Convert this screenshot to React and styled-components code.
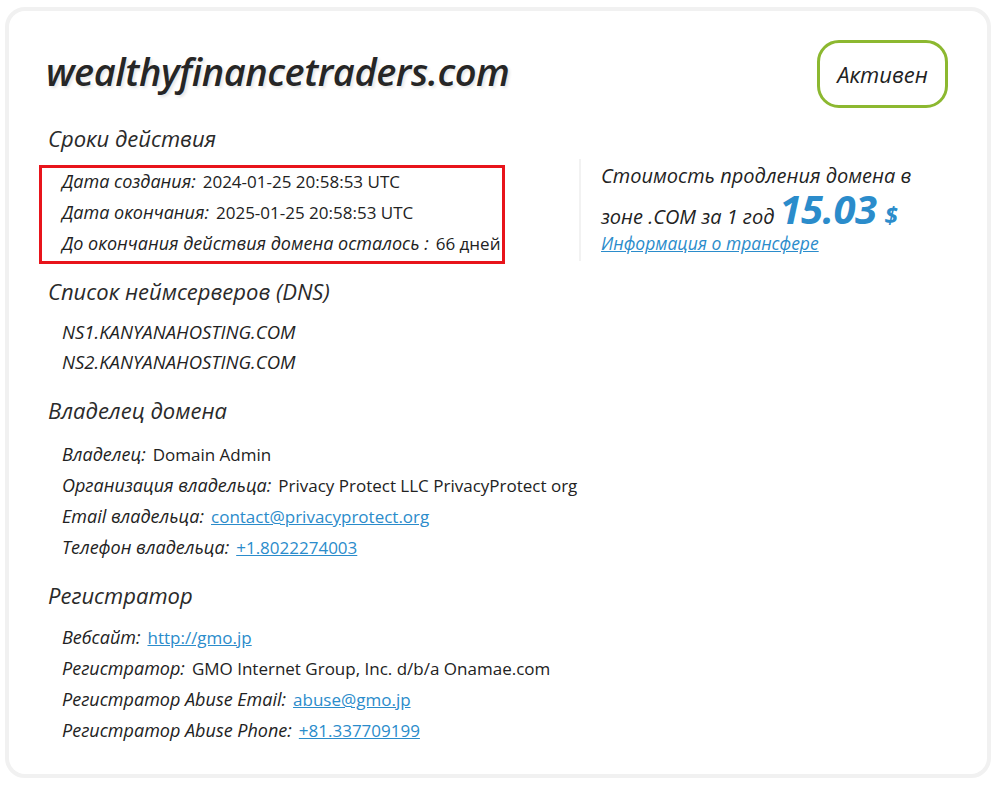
import React from "react";
import styled, { createGlobalStyle } from "styled-components";

const GlobalStyle = createGlobalStyle`
  body {
    margin: 0;
    background: #fff;
    font-family: "Open Sans", "Noto Sans", sans-serif;
    color: #222;
  }
`;

const Card = styled.div`
  box-sizing: border-box;
  width: 986px;
  height: 771px;
  margin: 7px 0 0 5px;
  border: 4px solid #f1f1f1;
  border-radius: 20px;
  padding: 30px 39px 0 30px;
`;

const Top = styled.div`
  display: flex;
  justify-content: space-between;
  align-items: flex-start;
`;

const Domain = styled.h1`
  margin: 6px 0 0 7px;
  font-size: 38px;
  line-height: 48px;
  font-style: italic;
  font-weight: 600;
  letter-spacing: -0.45px;
  color: #262626;
  text-shadow: 2px 2px 3px rgba(0, 0, 0, 0.1);
`;

const Status = styled.div`
  box-sizing: border-box;
  width: 131px;
  height: 68px;
  margin-top: -1px;
  border: 3px solid #8cb830;
  border-radius: 22px;
  display: flex;
  align-items: center;
  justify-content: center;
  font-size: 22px;
  font-style: italic;
  color: #222;
`;

const Heading = styled.h2`
  margin: ${(p) => p.$top || 0}px 0 0 9px;
  font-size: 22px;
  font-weight: 400;
  font-style: italic;
  color: #2a2a2a;
  line-height: 28px;
`;

const TermsRow = styled.div`
  display: flex;
  align-items: flex-start;
  margin-top: 13px;
`;

const Highlight = styled.div`
  box-sizing: border-box;
  width: 466px;
  border: 3px solid #e8141b;
  padding: 0 4px 2px 20px;

  & > div:first-child {
    margin-top: -2px;
  }
`;

const Price = styled.div`
  margin: -6px 0 0 74px;
  padding-left: 20px;
  border-left: 2px solid #f2f2f2;
  height: 102px;
`;

const PriceText = styled.div`
  margin-top: -2px;
  font-size: 20px;
  font-style: italic;
  line-height: 37px;
  color: #222;
  width: 330px;
`;

const Amount = styled.span`
  font-size: 40px;
  line-height: 30px;
  font-weight: 700;
  color: #2b8ccb;
  margin-left: 5px;
  letter-spacing: -0.5px;
`;

const Currency = styled.span`
  font-size: 24px;
  line-height: 30px;
  font-weight: 700;
  color: #2b8ccb;
  margin-left: 8px;
`;

const Link = styled.a`
  color: #2b8ccb;
  text-decoration: underline;
`;

const TransferLink = styled(Link)`
  display: block;
  margin-top: -4px;
  font-size: 17.5px;
  line-height: 24px;
  font-style: italic;
`;

const List = styled.div`
  margin-top: ${(p) => p.$top || 10}px;
  padding-left: 23px;
`;

const Row = styled.div`
  font-size: 17px;
  line-height: 31px;
  white-space: nowrap;
`;

const Label = styled.span`
  font-style: italic;
  font-size: 18px;
  margin-right: 7px;
`;

const Server = styled.div`
  font-size: 18.5px;
  line-height: 30px;
  font-style: italic;
`;

const terms = [
  ["Дата создания:", "2024-01-25 20:58:53 UTC"],
  ["Дата окончания:", "2025-01-25 20:58:53 UTC"],
  ["До окончания действия домена осталось :", "66 дней"],
];

const owner = [
  ["Владелец:", "Domain Admin"],
  ["Организация владельца:", "Privacy Protect LLC PrivacyProtect org"],
  ["Email владельца:", "contact@privacyprotect.org", true],
  ["Телефон владельца:", "+1.8022274003", true],
];

const registrar = [
  ["Вебсайт:", "http://gmo.jp", true],
  ["Регистратор:", "GMO Internet Group, Inc. d/b/a Onamae.com"],
  ["Регистратор Abuse Email:", "abuse@gmo.jp", true],
  ["Регистратор Abuse Phone:", "+81.337709199", true],
];

function Info({ label, value, link }) {
  return (
    <Row>
      <Label>{label}</Label>
      {link ? <Link href="#">{value}</Link> : value}
    </Row>
  );
}

export default function App() {
  return (
    <>
      <GlobalStyle />
      <Card>
        <Top>
          <Domain>wealthyfinancetraders.com</Domain>
          <Status>Активен</Status>
        </Top>

        <Heading $top={16}>Сроки действия</Heading>
        <TermsRow>
          <Highlight>
            {terms.map(([l, v]) => (
              <Info key={l} label={l} value={v} />
            ))}
          </Highlight>
          <Price>
            <PriceText>
              Стоимость продления домена в зоне .COM за 1 год
              <Amount>15.03</Amount>
              <Currency>$</Currency>
            </PriceText>
            <TransferLink href="#">Информация о трансфере</TransferLink>
          </Price>
        </TermsRow>

        <Heading $top={13}>Список неймсерверов (DNS)</Heading>
        <List $top={12}>
          <Server>NS1.KANYANAHOSTING.COM</Server>
          <Server>NS2.KANYANAHOSTING.COM</Server>
        </List>

        <Heading $top={19}>Владелец домена</Heading>
        <List $top={15}>
          {owner.map(([l, v, link]) => (
            <Info key={l} label={l} value={v} link={link} />
          ))}
        </List>

        <Heading $top={18}>Регистратор</Heading>
        <List $top={13}>
          {registrar.map(([l, v, link]) => (
            <Info key={l} label={l} value={v} link={link} />
          ))}
        </List>
      </Card>
    </>
  );
}
